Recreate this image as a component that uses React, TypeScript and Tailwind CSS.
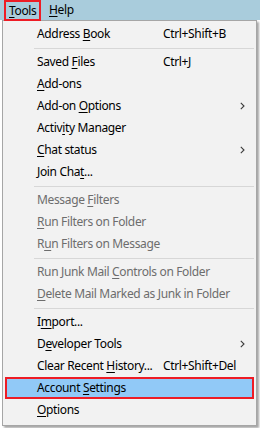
import React from "react";

type Item =
  | { sep: true }
  | {
      sep?: false;
      label: string;
      u: number; // underline index
      shortcut?: string;
      sub?: boolean;
      disabled?: boolean;
      active?: boolean;
    };

const items: Item[] = [
  { label: "Address Book", u: 8, shortcut: "Ctrl+Shift+B" },
  { sep: true },
  { label: "Saved Files", u: 6, shortcut: "Ctrl+J" },
  { label: "Add-ons", u: 0 },
  { label: "Add-on Options", u: 7, sub: true },
  { label: "Activity Manager", u: 5 },
  { label: "Chat status", u: 0, sub: true },
  { label: "Join Chat...", u: 8 },
  { sep: true },
  { label: "Message Filters", u: 8, disabled: true },
  { label: "Run Filters on Folder", u: 0, disabled: true },
  { label: "Run Filters on Message", u: 1, disabled: true },
  { sep: true },
  { label: "Run Junk Mail Controls on Folder", u: 14, disabled: true },
  { label: "Delete Mail Marked as Junk in Folder", u: 0, disabled: true },
  { sep: true },
  { label: "Import...", u: 1 },
  { label: "Developer Tools", u: 1, sub: true },
  { label: "Clear Recent History...", u: 13, shortcut: "Ctrl+Shift+Del" },
  { label: "Account Settings", u: 8, active: true },
  { label: "Options", u: 0 },
];

function Label({ text, u }: { text: string; u: number }) {
  return (
    <span className="whitespace-pre">
      {text.slice(0, u)}
      <span className="underline underline-offset-2 decoration-1">{text[u]}</span>
      {text.slice(u + 1)}
    </span>
  );
}

function Chevron() {
  return (
    <svg width="5" height="8" viewBox="0 0 5 8" className="block">
      <path d="M0.8 0.8 L4 4 L0.8 7.2" fill="none" stroke="#3c3c3c" strokeWidth="1.1" />
    </svg>
  );
}

export default function App() {
  return (
    <div
      className="w-[260px] h-[428px] bg-white overflow-hidden text-[12px] tracking-[-0.35px] text-black"
      style={{ fontFamily: '"Noto Sans", "Open Sans", sans-serif' }}
    >
      <div className="h-[20px] bg-[#a9ccdc] flex items-stretch pl-[4px]">
        <div className="border-2 border-[#ee1c25] w-[37px] h-[21px] flex items-center pl-[3px] bg-[#a9ccdc] relative z-10">
          <Label text="Tools" u={0} />
        </div>
        <div className="flex items-center pl-[8px]">
          <Label text="Help" u={0} />
        </div>
      </div>
      <div className="ml-[2px] w-[255px] bg-[#f2f2f2] border border-[#a6a6a6] pt-[2px] pb-[4px] shadow-[2px_2px_2px_rgba(0,0,0,0.35)]">
        {items.map((it, i) =>
          it.sep ? (
            <div key={i} className="h-[6px] flex items-center pl-[31px] pr-[2px]">
              <div className="h-px w-full bg-[#d7d7d7]" />
            </div>
          ) : (
            <div
              key={i}
              className={
                "h-[22px] flex items-center mx-[2px] " +
                (it.active ? "bg-[#91c9f7] border-2 border-[#ee1c25] " : "") +
                (it.disabled ? "text-[#6d6d6d]" : "text-black")
              }
            >
              <div className={it.active ? "w-[125px] pl-[30px] shrink-0" : "w-[125px] pl-[32px] shrink-0"}>
                <Label text={it.label} u={it.u} />
              </div>
              {it.shortcut && <div className="pl-[33px] whitespace-pre">{it.shortcut}</div>}
              {it.sub && (
                <div className="ml-auto pr-[9px]">
                  <Chevron />
                </div>
              )}
            </div>
          )
        )}
      </div>
    </div>
  );
}
